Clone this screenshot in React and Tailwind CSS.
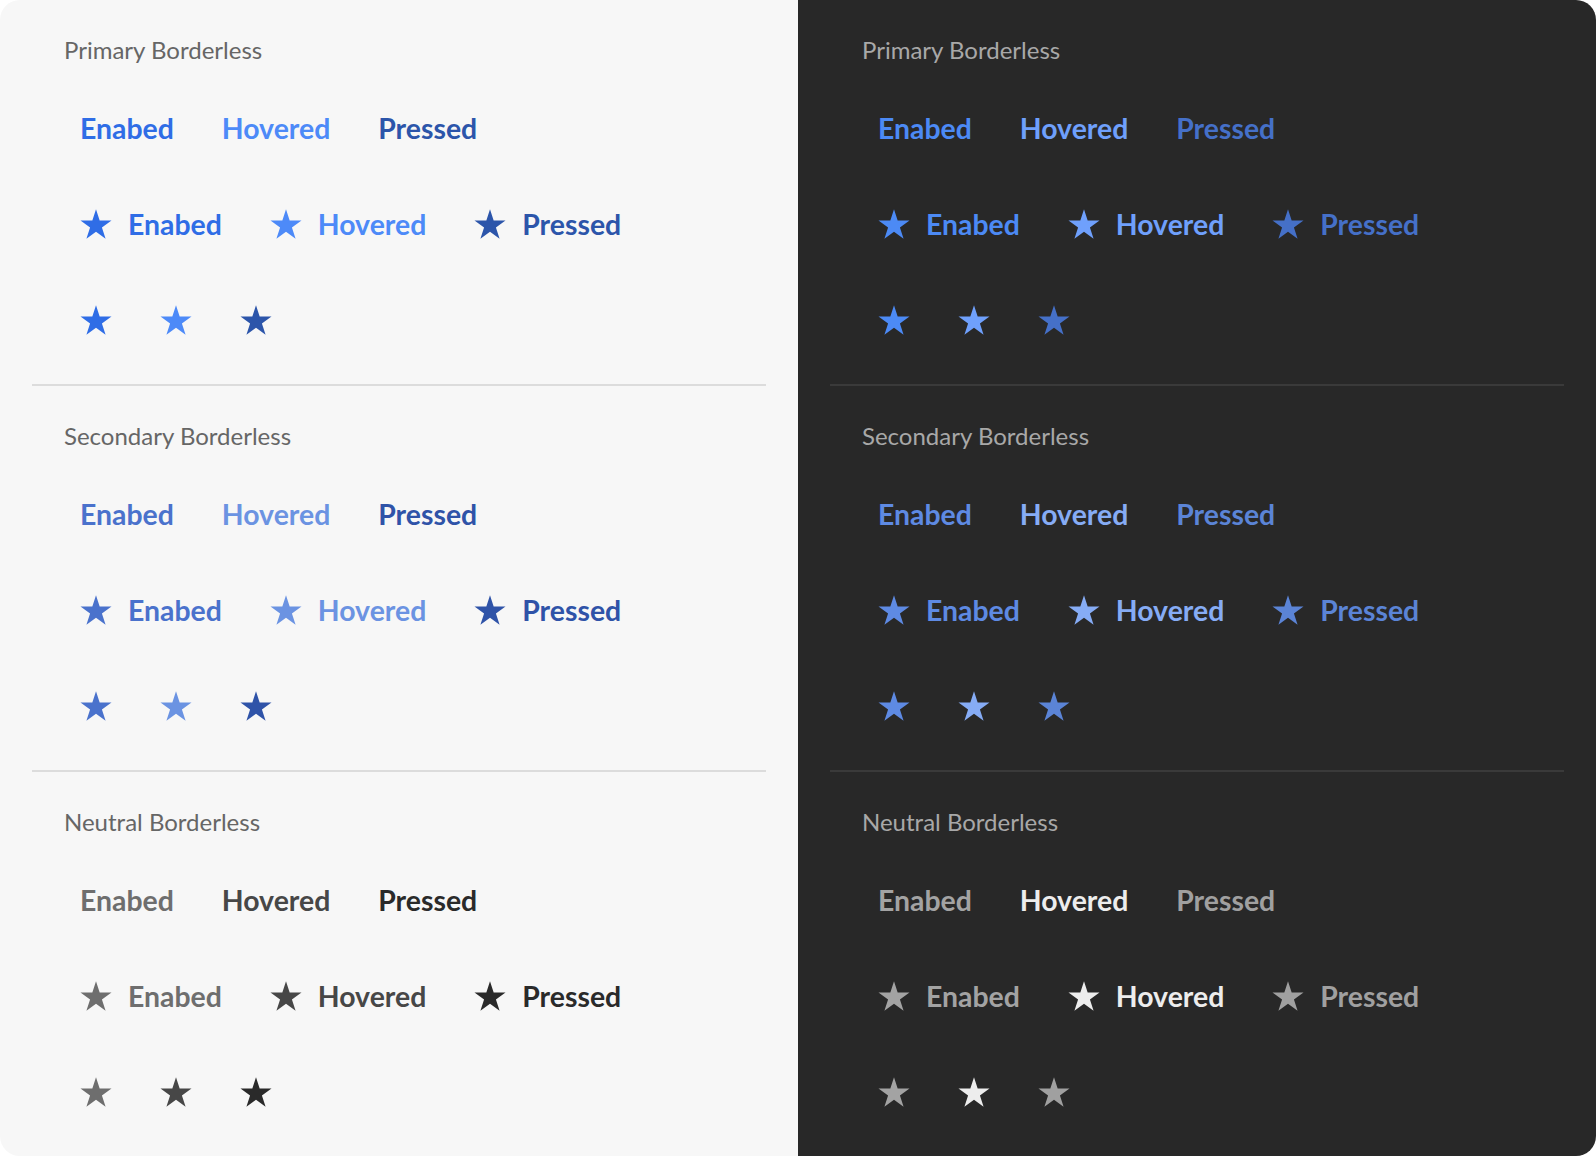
import React from 'react';

const STAR = '16,1.2 19.66,12.46 31.5,12.46 21.93,19.43 25.58,30.69 16,23.73 6.42,30.69 10.07,19.43 0.5,12.46 12.34,12.46';

function Star({ className }) {
  return (
    <svg viewBox="0 0 32 32" className={`w-8 h-8 shrink-0 ${className}`} fill="currentColor">
      <polygon points={STAR} />
    </svg>
  );
}

const sections = [
  {
    title: 'Primary Borderless',
    light: ['text-[#2f6de6]', 'text-[#4d8af8]', 'text-[#2c55aa]'],
    dark: ['text-[#4c8af5]', 'text-[#6fa0fc]', 'text-[#4570c8]'],
  },
  {
    title: 'Secondary Borderless',
    light: ['text-[#4a72cc]', 'text-[#6b93e2]', 'text-[#2f53a8]'],
    dark: ['text-[#5e8ae3]', 'text-[#86acf5]', 'text-[#5b84d6]'],
  },
  {
    title: 'Neutral Borderless',
    light: ['text-[#6e6e6e]', 'text-[#474747]', 'text-[#2a2a2a]'],
    dark: ['text-[#a3a3a3]', 'text-[#ededed]', 'text-[#a0a0a0]'],
  },
];

const states = ['Enabed', 'Hovered', 'Pressed'];

function Section({ section, dark }) {
  const colors = dark ? section.dark : section.light;
  return (
    <div className="flex flex-col gap-8 px-8 py-8">
      <p className={`text-[24px] leading-8 pt-0.5 -mb-0.5 ${dark ? 'text-[#a8a8a8]' : 'text-[#666666]'}`}>{section.title}</p>

      <div className="flex gap-4">
        {states.map((s, i) => (
          <button key={s} className={`h-16 px-4 flex items-center text-[28.4px] leading-8 font-bold ${colors[i]}`}>
            {s}
          </button>
        ))}
      </div>

      <div className="flex gap-4">
        {states.map((s, i) => (
          <button key={s} className={`h-16 px-4 flex items-center gap-4 text-[28.4px] leading-8 font-bold ${colors[i]}`}>
            <Star />
            {s}
          </button>
        ))}
      </div>

      <div className="flex gap-4">
        {states.map((s, i) => (
          <button key={s} aria-label={s} className={`h-16 px-4 flex items-center ${colors[i]}`}>
            <Star />
          </button>
        ))}
      </div>
    </div>
  );
}

function Panel({ dark }) {
  return (
    <div
      className={`w-[798px] px-8 flex flex-col ${
        dark ? 'bg-[#282828] rounded-r-[20px]' : 'bg-[#f7f7f7] rounded-l-[20px]'
      }`}
    >
      {sections.map((sec, i) => (
        <React.Fragment key={sec.title}>
          {i > 0 && <div className={`h-0.5 ${dark ? 'bg-[#3a3a3a]' : 'bg-[#dcdcdc]'}`} />}
          <Section section={sec} dark={dark} />
        </React.Fragment>
      ))}
    </div>
  );
}

export default function App() {
  return (
    <div className="bg-white w-[1596px] h-[1156px] flex font-['Lato',sans-serif]">
      <Panel />
      <Panel dark />
    </div>
  );
}
